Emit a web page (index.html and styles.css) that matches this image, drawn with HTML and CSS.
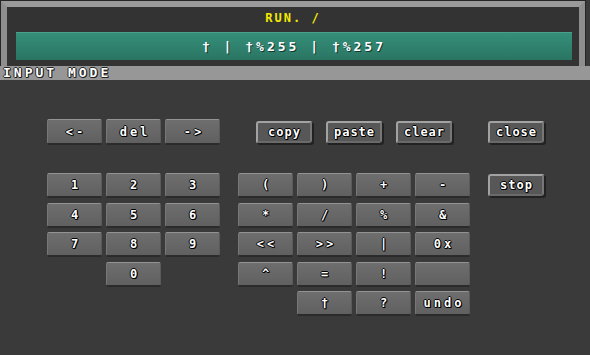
FILE: index.html
```html
<!DOCTYPE html>
<html lang="en">
<head>
    <meta charset="UTF-8">
    <meta name="viewport" content="width=device-width, initial-scale=1.0">
    <title>Input Mode</title>
    <link rel="stylesheet" href="styles.css">
</head>
<body>
    <header class="frame">
        <div class="title">RUN. /</div>
        <div class="expr">† | †%255 | †%257</div>
    </header>
    <div class="mode-bar">INPUT MODE</div>

    <main class="panel">
        <div class="toolbar">
            <div class="edit">
                <button class="key">&lt;-</button>
                <button class="key">del</button>
                <button class="key">-&gt;</button>
            </div>
            <div class="tools">
                <button class="btn">copy</button>
                <button class="btn">paste</button>
                <button class="btn">clear</button>
            </div>
            <button class="btn btn-side">close</button>
        </div>

        <div class="pad">
            <div class="digits">
                <button class="key">1</button>
                <button class="key">2</button>
                <button class="key">3</button>
                <button class="key">4</button>
                <button class="key">5</button>
                <button class="key">6</button>
                <button class="key">7</button>
                <button class="key">8</button>
                <button class="key">9</button>
                <span class="empty"></span>
                <button class="key">0</button>
            </div>
            <div class="ops">
                <button class="key">(</button>
                <button class="key">)</button>
                <button class="key">+</button>
                <button class="key">-</button>
                <button class="key">*</button>
                <button class="key">/</button>
                <button class="key">%</button>
                <button class="key">&amp;</button>
                <button class="key">&lt;&lt;</button>
                <button class="key">&gt;&gt;</button>
                <button class="key">|</button>
                <button class="key">0x</button>
                <button class="key">^</button>
                <button class="key">=</button>
                <button class="key">!</button>
                <button class="key"></button>
                <span class="empty"></span>
                <button class="key">†</button>
                <button class="key">?</button>
                <button class="key">undo</button>
            </div>
            <button class="btn btn-side btn-stop">stop</button>
        </div>
    </main>
</body>
</html>
```

FILE: styles.css
```css
body {
    margin: 0;
    height: 355px;
    overflow: hidden;
    background-color: #3a3a3a;
    font-family: 'DejaVu Sans Mono', monospace;
    font-weight: bold;
    color: #fff;
}

button {
    font-family: inherit;
    font-weight: bold;
    color: #fff;
    padding: 0;
    box-sizing: border-box;
    text-shadow: -1px 0 #000, 1px 0 #000, 0 -1px #000, 0 1px #000, 1px 1px #000;
}

/* верхняя рамка */
.frame {
    margin: 1px 5px 0 1px;
    height: 59px;
    border: 6px solid #8e8e8e;
    border-bottom: none;
    border-top-color: #9a9a9a;
    background-color: #333;
    box-shadow: 0 0 0 1px #262626;
}

.title {
    height: 24px;
    line-height: 23px;
    text-align: center;
    color: #f2ea00;
    font-size: 12px;
    letter-spacing: 2px;
}

.expr {
    margin: 1px 7px 0 9px;
    height: 28px;
    line-height: 28px;
    text-align: center;
    font-size: 13px;
    letter-spacing: 3px;
    background: linear-gradient(#358f78, #2a7563);
    border-top: 1px solid #4a9f89;
    box-sizing: border-box;
    text-shadow: 1px 1px 0 #123a30;
}

.mode-bar {
    height: 14px;
    line-height: 14px;
    padding-left: 3px;
    background-color: #979797;
    font-size: 13px;
    letter-spacing: 3px;
    text-shadow: -1px 0 #222, 1px 0 #222, 0 -1px #222, 0 1px #222, 1px 1px #222;
}

.panel {
    padding: 39px 0 0 47px;
}

.toolbar {
    display: flex;
    align-items: center;
    height: 25px;
}

.edit {
    display: flex;
    gap: 4px;
}

.key {
    width: 55px;
    height: 24px;
    font-size: 12px;
    letter-spacing: 3px;
    padding-left: 3px;
    border: 1px solid;
    border-color: #939393 #5a5a5a #2c2c2c #777;
    border-radius: 2px;
    background: linear-gradient(#6e6e6e, #606060);
    box-shadow: 0 1px 0 #2a2a2a;
}

.edit .key {
    height: 25px;
}

.tools {
    display: flex;
    gap: 14px;
    margin-left: 36px;
}

.btn {
    width: 56px;
    height: 22px;
    font-size: 12px;
    letter-spacing: 1px;
    padding-left: 1px;
    border: 2px solid #a2a2a2;
    border-right-color: #777;
    border-bottom-color: #6a6a6a;
    border-radius: 3px 1px 3px 1px;
    background-color: #575757;
    box-shadow: 2px 2px 0 #222;
}

.btn-side {
    margin-left: 36px;
}

.pad {
    display: flex;
    align-items: flex-start;
    margin-top: 29px;
}

.digits,
.ops {
    display: grid;
    grid-auto-rows: 24px;
    column-gap: 4px;
    row-gap: 5.5px;
}

.digits {
    grid-template-columns: repeat(3, 55px);
}

.ops {
    grid-template-columns: repeat(4, 55px);
    margin-left: 18px;
}

.btn-stop {
    margin-left: 18px;
    margin-top: 1px;
}
```
